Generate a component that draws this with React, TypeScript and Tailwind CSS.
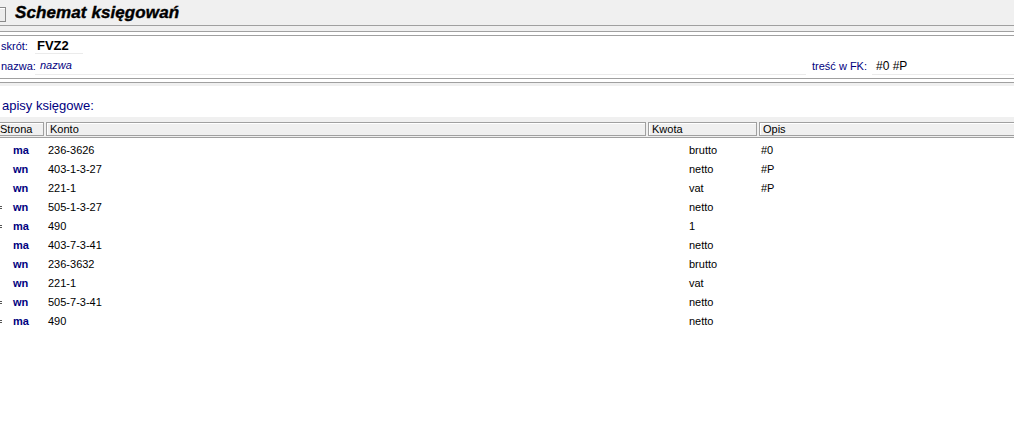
import React from "react";

type Row = { mark: boolean; s: string; k: string; q: string; o: string };

const rows: Row[] = [
  { mark: false, s: "ma", k: "236-3626", q: "brutto", o: "#0" },
  { mark: false, s: "wn", k: "403-1-3-27", q: "netto", o: "#P" },
  { mark: false, s: "wn", k: "221-1", q: "vat", o: "#P" },
  { mark: true, s: "wn", k: "505-1-3-27", q: "netto", o: "" },
  { mark: true, s: "ma", k: "490", q: "1", o: "" },
  { mark: false, s: "ma", k: "403-7-3-41", q: "netto", o: "" },
  { mark: false, s: "wn", k: "236-3632", q: "brutto", o: "" },
  { mark: false, s: "wn", k: "221-1", q: "vat", o: "" },
  { mark: true, s: "wn", k: "505-7-3-41", q: "netto", o: "" },
  { mark: true, s: "ma", k: "490", q: "netto", o: "" },
];

const cell =
  "h-[14px] border border-[#a0a0a0] shadow-[inset_1px_1px_0_#ffffff] flex items-center pl-[3px] leading-none shrink-0";

export default function App() {
  return (
    <div className="w-[1014px] h-[428px] overflow-hidden bg-white text-[11px] text-black font-['Liberation_Sans',Arial,sans-serif]">
      {/* title bar */}
      <div className="h-[25px] bg-[#f0f0f0] flex items-start">
        <div className="-ml-[8px] mt-[7px] w-[14px] h-[15px] border border-[#8a8a8a] bg-[#ececec] shadow-[inset_1px_1px_0_#ffffff] shrink-0" />
        <span className="ml-[9px] mt-[3px] text-[17px] leading-[19px] font-bold italic tracking-[0.1px] [-webkit-text-stroke:0.4px_#000] whitespace-nowrap">
          Schemat księgowań
        </span>
      </div>
      <div className="h-px bg-[#a0a0a0]" />
      <div className="h-[5px] bg-[#f0f0f0]" />
      <div className="h-px bg-[#a0a0a0]" />
      <div className="h-[3px] bg-white" />
      <div className="h-px bg-[#a0a0a0]" />

      {/* form */}
      <div className="h-[42px] flex flex-col">
        <div className="h-[20px] flex items-start">
          <span className="ml-[1px] w-[34px] shrink-0 self-center text-[#000080] leading-none">skrót:</span>
          <div className="mt-[1px] w-[48px] h-[17px] border-b border-[#ebebeb] flex items-center pl-[2px] shrink-0">
            <span className="text-[13px] font-bold leading-none">FVZ2</span>
          </div>
        </div>
        <div className="h-[22px] flex items-start">
          <span className="ml-[1px] w-[34px] shrink-0 mt-[5px] text-[#000080] leading-none">nazwa:</span>
          <div className="mt-[1px] w-[771px] h-[18px] border-b border-[#ebebeb] flex items-center pl-[5px] shrink-0">
            <span className="italic text-[#000080] text-[11px] leading-none">nazwa</span>
          </div>
          <span className="ml-[6px] w-[60px] shrink-0 mt-[5px] text-[#000080] leading-none whitespace-nowrap">treść w FK:</span>
          <div className="mt-[1px] flex-1 h-[18px] border-b border-[#ebebeb] flex items-center pl-[4px]">
            <span className="text-[12px] leading-none">#0 #P</span>
          </div>
        </div>
      </div>
      <div className="h-px bg-[#a0a0a0]" />
      <div className="h-[3px] bg-white" />
      <div className="h-px bg-[#a0a0a0]" />
      <div className="h-[3px] bg-[#f0f0f0]" />

      {/* section label */}
      <div className="h-[31px] flex items-end pb-[4px]">
        <span className="ml-[2px] text-[13px] leading-[15px] text-[#000080]">apisy księgowe:</span>
      </div>

      {/* header */}
      <div className="h-[20px] bg-[#f0f0f0] flex items-start gap-[2px] pt-[5px]">
        <div className={`${cell} -ml-[10px] w-[54px] pl-[9px]`}>Strona</div>
        <div className={`${cell} w-[600px]`}>Konto</div>
        <div className={`${cell} w-[109px]`}>Kwota</div>
        <div className={`${cell} w-[270px]`}>Opis</div>
      </div>
      <div className="h-px bg-[#a0a0a0]" />

      {/* rows */}
      <div className="pt-[3px] flex flex-col">
        {rows.map((r, i) => (
          <div key={i} className="h-[19px] flex items-center leading-none">
            <div className="w-[13px] shrink-0 flex flex-col gap-[1px] justify-center">
              {r.mark ? (
                <>
                  <span className="block w-[2px] h-px bg-[#555555]" />
                  <span className="block w-[2px] h-px bg-[#555555]" />
                </>
              ) : null}
            </div>
            <span className="w-[35px] shrink-0 font-bold text-[#000080]">{r.s}</span>
            <span className="w-[641px] shrink-0">{r.k}</span>
            <span className="w-[72px] shrink-0">{r.q}</span>
            <span>{r.o}</span>
          </div>
        ))}
      </div>
    </div>
  );
}
